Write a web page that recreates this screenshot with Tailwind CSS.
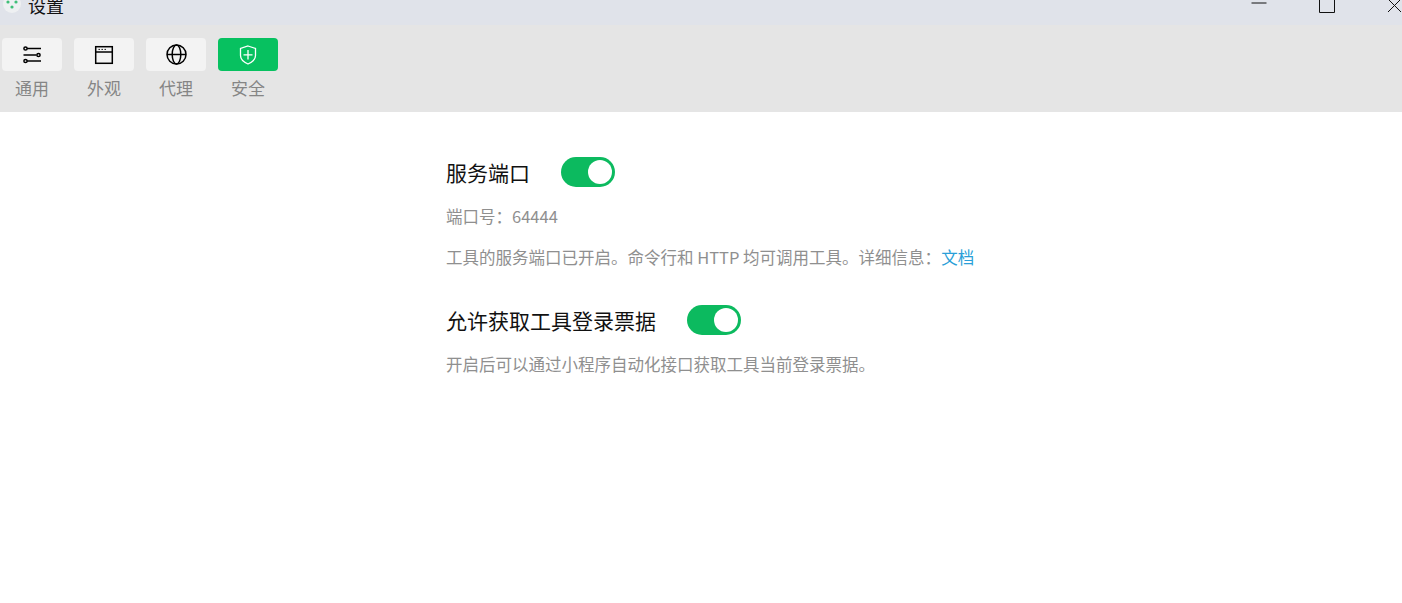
<!DOCTYPE html>
<html lang="zh-CN">
<head>
  <meta charset="UTF-8">
  <meta name="viewport" content="width=device-width, initial-scale=1.0">
  <title>设置</title>
  <script src="https://cdn.jsdelivr.net/npm/@tailwindcss/browser@4"></script>
</head>
<body class="h-screen overflow-hidden bg-white font-['Noto_Sans_CJK_SC','Noto_Sans',sans-serif]">
  <!-- 标题栏 -->
  <div class="h-[25px] bg-[#e0e3ea] overflow-hidden flex items-start justify-between">
    <div class="flex items-center -mt-[7px]">
      <svg class="ml-[3px] mt-[-3px] w-[18px] h-[18px]" viewBox="0 0 18 18">
        <circle cx="9" cy="9" r="9" fill="#eef0f2"/>
        <circle cx="5" cy="7" r="1.6" fill="#3fbf78"/>
        <circle cx="13" cy="7" r="1.6" fill="#3fbf78"/>
        <circle cx="9" cy="12" r="1.6" fill="#3fbf78"/>
      </svg>
      <span class="ml-[7px] text-[18px] leading-[24px] text-[#111]">设置</span>
    </div>
    <div class="flex items-start text-[#111]">
      <svg class="w-[16px] h-[6px] mr-[52px]" viewBox="0 0 16 6"><path d="M0.5 3h15" stroke="currentColor" stroke-width="1"/></svg>
      <svg class="w-[16px] h-[13px] mr-[52px]" viewBox="0 0 16 13" fill="none"><path d="M0.5 0v12.500h15V0" stroke="currentColor" stroke-width="1"/></svg>
      <svg class="w-[15px] h-[12px]" viewBox="0 0 15 12" fill="none"><path d="M1 -1l13 13M14 -1L1 12" stroke="currentColor" stroke-width="1"/></svg>
    </div>
  </div>

  <!-- 工具栏 -->
  <div class="h-[87px] bg-[#e5e5e5] flex gap-[12px] pl-[2px] pt-[13px]">
    <div class="w-[60px] flex flex-col items-center">
      <div class="w-[60px] h-[33px] rounded-[4px] bg-[#f3f3f3] flex items-center justify-center">
        <svg class="w-[20px] h-[20px] text-black" viewBox="0 0 20 20" fill="none" stroke="currentColor" stroke-width="1.500">
          <circle cx="3.500" cy="3.500" r="1.600"/><path d="M5 3.500h14"/>
          <path d="M1.500 10h13"/><circle cx="16.500" cy="10" r="1.600"/>
          <circle cx="3.500" cy="16" r="1.600"/><path d="M5 16h14"/>
        </svg>
      </div>
      <span class="mt-[5px] text-[17px] leading-[24px] text-[#858585]">通用</span>
    </div>
    <div class="w-[60px] flex flex-col items-center">
      <div class="w-[60px] h-[33px] rounded-[4px] bg-[#f3f3f3] flex items-center justify-center">
        <svg class="w-[20px] h-[20px] text-black" viewBox="0 0 20 20" fill="none" stroke="currentColor" stroke-width="1.500">
          <rect x="1.700" y="1.700" width="16.600" height="16.600"/><path d="M1.700 7h16.600"/>
          <path d="M4.500 4.400h1.400M7.500 4.400h1.400M10.500 4.400h1.400" stroke-width="1"/>
        </svg>
      </div>
      <span class="mt-[5px] text-[17px] leading-[24px] text-[#858585]">外观</span>
    </div>
    <div class="w-[60px] flex flex-col items-center">
      <div class="w-[60px] h-[33px] rounded-[4px] bg-[#f3f3f3] flex items-center justify-center">
        <svg class="w-[21px] h-[21px] text-black" viewBox="0 0 21 21" fill="none" stroke="currentColor" stroke-width="1.500">
          <circle cx="10.500" cy="10.500" r="9.500"/><ellipse cx="10.500" cy="10.500" rx="4.300" ry="9.500"/>
          <path d="M1 10.500h19"/>
        </svg>
      </div>
      <span class="mt-[5px] text-[17px] leading-[24px] text-[#858585]">代理</span>
    </div>
    <div class="w-[60px] flex flex-col items-center">
      <div class="w-[60px] h-[33px] rounded-[4px] bg-[#07c160] flex items-center justify-center">
        <svg class="w-[18px] h-[20px] text-white" viewBox="0 0 18 20" fill="none" stroke="currentColor" stroke-width="1.300">
          <path d="M9 1l7.500 2.400v7.200c0 3.800-3.300 6.600-7.500 8.400-4.200-1.800-7.500-4.600-7.500-8.400V3.400z"/>
          <path d="M9 5v9.500M4.500 9.800h9"/>
        </svg>
      </div>
      <span class="mt-[5px] text-[17px] leading-[24px] text-[#858585]">安全</span>
    </div>
  </div>

  <!-- 内容 -->
  <div class="pl-[446px] pt-[45px]">
    <div class="flex items-center h-[30px]">
      <span class="text-[21px] leading-[30px] text-[#111]">服务端口</span>
      <div class="ml-[31px] w-[54px] h-[30px] rounded-full bg-[#0cba5f] flex items-center justify-end pr-[3px]">
        <div class="w-[24px] h-[24px] rounded-full bg-white"></div>
      </div>
    </div>
    <p class="mt-[17px] text-[16.500px] leading-[24px] text-[#8f8f8f]">端口号：64444</p>
    <p class="mt-[17px] text-[16.500px] leading-[24px] text-[#8f8f8f]">工具的服务端口已开启。命令行和 HTTP 均可调用工具。详细信息：<a class="text-[#2a9fd8]">文档</a></p>
    <div class="flex items-center h-[30px] mt-[36px]">
      <span class="text-[21px] leading-[30px] text-[#111]">允许获取工具登录票据</span>
      <div class="ml-[31px] w-[54px] h-[30px] rounded-full bg-[#0cba5f] flex items-center justify-end pr-[3px]">
        <div class="w-[24px] h-[24px] rounded-full bg-white"></div>
      </div>
    </div>
    <p class="mt-[17px] text-[16.500px] leading-[24px] text-[#8f8f8f]">开启后可以通过小程序自动化接口获取工具当前登录票据。</p>
  </div>
</body>
</html>
